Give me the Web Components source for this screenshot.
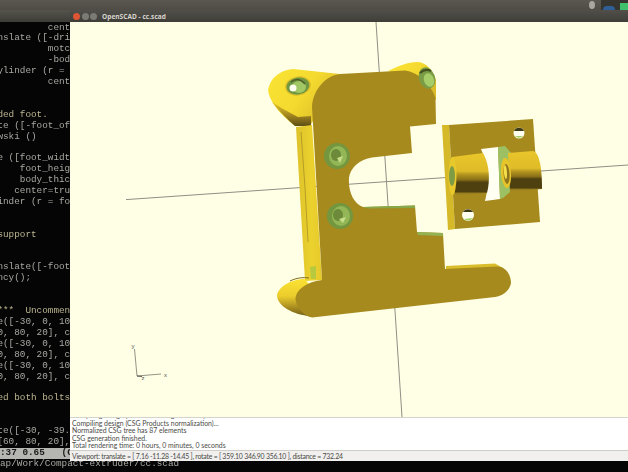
<!DOCTYPE html>
<html>
<head>
<meta charset="utf-8">
<title>OpenSCAD - cc.scad</title>
<style>
  html, body { margin: 0; padding: 0; background: #000; }
</style>
</head>
<body>
<desk-top>
  <term-window></term-window>
  <scad-window title-text="OpenSCAD - cc.scad">
    <model-view></model-view>
    <console-log></console-log>
    <status-line>Viewport: translate = [ 7.16 -11.28 -14.45 ], rotate = [ 359.10 346.90 356.10 ], distance = 732.24</status-line>
  </scad-window>
</desk-top>

<script>
// Desktop with top panel and free-floating windows
class DeskTop extends HTMLElement {
  constructor() {
    super();
    this.attachShadow({ mode: 'open' });
    this.shadowRoot.innerHTML = `
      <style>
        :host { display: block; position: relative; width: 628px; height: 472px; overflow: hidden;
                background: linear-gradient(90deg, #000 0 470px, #12060e 500px, #1f0a18 100%); }
        .panel { height: 10px; background: linear-gradient(#5a5850, #4e4c45); display: flex; justify-content: flex-end; align-items: center; }
        .tray { width: 27px; height: 10px; position: relative; background: #37352f; }
        .gear { position: absolute; left: -12px; top: 1px; width: 6px; height: 8px; border-radius: 50%; background: #a9a79f; }
        .blue { position: absolute; left: 2px; top: 6px; width: 12px; height: 4px; border-radius: 6px 6px 0 0; background: #2f5f96; }
        .green { position: absolute; left: 19px; top: 3px; width: 8px; height: 7px; background: #3fc06a; }
      </style>
      <div class="panel"><div class="tray"><i class="gear"></i><i class="blue"></i><i class="green"></i></div></div>
      <slot></slot>
    `;
  }
}

// Terminal behind the OpenSCAD window
class TermWindow extends HTMLElement {
  constructor() {
    super();
    this.attachShadow({ mode: 'open' });
    const lines = [
      '         cent', 'nslate ([-dri', '         motc', '         -bod', 'ylinder (r = ', '         cent', '', '',
      '<b>ded foot.</b>', 'te ([-foot_of', 'wski ()', '', 'e ([foot_widt', '    foot_heig', '    body_thic', '   center=tru',
      'inder (r = fo', '', '', '<b>support</b>', '', '', 'nslate([-foot', 'ncy();', '', '',
      '<b>***  Uncommen</b>', 'e([-30, 0, 10', '0, 80, 20], c', 'e([-30, 0, 10', '0, 80, 20], c', 'e([-30, 0, 10', '0, 80, 20], c', '',
      '<b>ed both bolts</b>', '', '', 'te([-30, -39.', '[60, 80, 20],'
    ];
    this.shadowRoot.innerHTML = `
      <style>
        :host { display: block; position: absolute; left: 0; top: 10px; width: 628px; height: 462px; background: #050505; }
        .bar { height: 12px; background: linear-gradient(#55534c, #3d3c37); }
        pre { margin: 0 0 0 -2.6px; padding-top: .5px; font: 9.33px/10.9px "Liberation Mono", monospace; color: #a9a9a3; filter: blur(.3px); }
        b { font-weight: normal; color: #bdb692; }
        .mode { display: block; margin-left: 2.6px; background: #b5b5b1; color: #1a1a1a; font-weight: bold; }
        .path { display: block; padding-left: 2.6px; color: #a9a9a5; }
      </style>
      <div class="bar"></div>
      <pre>${lines.join('\n')}
<span class="mode">:37 0.65   (C</span><span class="path">ap/Work/Compact-extruder/cc.scad</span></pre>
    `;
  }
}

// OpenSCAD window frame
class ScadWindow extends HTMLElement {
  constructor() {
    super();
    this.attachShadow({ mode: 'open' });
    this.shadowRoot.innerHTML = `
      <style>
        :host { display: flex; flex-direction: column; position: absolute; left: 70px; top: 10px; width: 558px; height: 451px; background: #f2f1f0; }
        .title { flex: 0 0 12px; display: flex; align-items: center; box-sizing: border-box; padding-top: 1px; background: linear-gradient(#514f49, #3e3d38); }
        .btn { width: 7px; height: 7px; border-radius: 50%; margin-left: 1.500px; background: #7b7a74; }
        .btn.close { margin-left: 3px; background: #dc5636; }
        .title span { margin-left: 5px; font: bold 6.500px "Open Sans", sans-serif; color: #d8d6cf; letter-spacing: .05px; }
      </style>
      <div class="title"><i class="btn close"></i><i class="btn"></i><i class="btn"></i><span>${this.getAttribute('title-text')}</span></div>
      <slot></slot>
    `;
  }
}

// 3D viewport, drawn in page coordinates
class ModelView extends HTMLElement {
  constructor() {
    super();
    this.attachShadow({ mode: 'open' });
    this.shadowRoot.innerHTML = `
      <style>
        :host { display: block; flex: 0 0 395px; background: #ffffe5; }
        svg { display: block; }
        text { font: 6px "Liberation Sans", sans-serif; fill: #555; }
      </style>
      <svg width="558" height="395" viewBox="70 22 558 395">
        <defs>
          <linearGradient id="ear" x1="0" y1="0" x2="1" y2="0.6">
            <stop offset="0" stop-color="#fbe534"/><stop offset=".55" stop-color="#f4d92f"/><stop offset="1" stop-color="#d9bc28"/>
          </linearGradient>
          <linearGradient id="earLow" x1="0" y1="0" x2="0" y2="1">
            <stop offset="0" stop-color="#e8c92a"/><stop offset=".5" stop-color="#a98c20"/><stop offset="1" stop-color="#5e4e16"/>
          </linearGradient>
          <linearGradient id="side" x1="0" y1="0" x2="1" y2="0">
            <stop offset="0" stop-color="#dcc12b"/><stop offset=".6" stop-color="#ecd22e"/><stop offset="1" stop-color="#e5c92b"/>
          </linearGradient>
          <linearGradient id="footEnd" x1="0" y1="0" x2="0" y2="1">
            <stop offset="0" stop-color="#fbe233"/><stop offset=".45" stop-color="#eccd2c"/><stop offset=".75" stop-color="#a88c20"/><stop offset="1" stop-color="#6e5b18"/>
          </linearGradient>
          <linearGradient id="cyl" x1="0" y1="0" x2="0" y2="1">
            <stop offset="0" stop-color="#e9c62a"/><stop offset=".42" stop-color="#dfbc28"/><stop offset=".5" stop-color="#b3951f"/>
            <stop offset=".62" stop-color="#8a7119"/><stop offset=".68" stop-color="#4f400f"/><stop offset=".9" stop-color="#4f400f"/><stop offset=".94" stop-color="#9a801e"/><stop offset="1" stop-color="#ab8e21"/>
          </linearGradient>
        </defs>

        <!-- axes -->
        <g stroke="#8f8f85" stroke-width="1" fill="none">
          <path d="M376 22L402 417"/>
          <path d="M126 199.6L628 165"/>
        </g>
        <g stroke="#77776c" stroke-width=".8" fill="none">
          <path d="M134.500 349L137 376"/>
          <path d="M137 376L161 374"/>
          <path d="M137 376L142 376.500" stroke="#333"/>
        </g>
        <text x="131.500" y="348">y</text>
        <text x="164" y="376.500">x</text>
        <text x="141.500" y="380">z</text>

        <!-- left ear -->
        <path d="M268 90C270 78 280 70 293 69L340 74L310 126L295 126C285 118 270 105 268 90Z" fill="url(#ear)"/>
        <path d="M272 102C280 112 288 120 295 126L311 126L311 116L298 117C288 112 278 106 272 102Z" fill="url(#earLow)"/>
        <!-- right ear -->
        <path d="M388 71C398 66 408 62 417 62C426 62 433 70 436 80L436 100L400 74Z" fill="url(#ear)"/>
        <!-- side wall of body -->
        <path d="M296 127L312 125L322 280L305 281Z" fill="url(#side)"/>
        <path d="M301 132L305 188L308 242" stroke="#a08a20" stroke-width=".7" fill="none"/>
        <path d="M310 267L316 266L316 279L311 279Z" fill="#b6c93f"/>
        <!-- foot rounded end -->
        <path d="M305 279C292 279 279 286 277 295C277 304 288 312 303 315L312 317L320 300Z" fill="url(#footEnd)"/>
        <path d="M290 281C296 278 303 277 309 278" stroke="#7d6a18" stroke-width="1" fill="none"/>
        <path d="M446 266L495 263.500L503 268L446 271Z" fill="#d9bd2a"/>

        <!-- body face -->
        <path d="M312 107C313 90 325 76 340 74L405 70.500C418 72 431 84 435.500 98L436 124L410 126.500L412 153L372 157.500C360 159 350 168 349 178C348 192 354 204 363 207L415 205.500L417 232L443 233L445 269L497 266.500C506 266.500 511 275 511 283C510 290 503 296 495 297L312 317.500C303 316 296 306 295.500 299C296 290 306 282 322 280Z" fill="#a78a1e"/>
        <path d="M363 207L415 205.500L415 208L368 208.500Z" fill="#84a84a"/>
        <path d="M417 232L443 233L443 236L418 235Z" fill="#93b253"/>

        <!-- body screw holes -->
        <g>
          <ellipse cx="298" cy="86" rx="13" ry="9.500" fill="#d7bd2a" transform="rotate(-10 298 86)"/>
          <ellipse cx="298" cy="86" rx="11.500" ry="8.500" fill="#6f9640" transform="rotate(-10 298 86)"/>
          <ellipse cx="299" cy="87" rx="7" ry="6" fill="#a2c865"/>
          <ellipse cx="293" cy="88" rx="3.500" ry="3.500" fill="#fffff0"/>
          <path d="M291 82Q298 76 305 84" stroke="#4f5c25" stroke-width="1.500" fill="none"/>
        </g>
        <g>
          <ellipse cx="427" cy="78" rx="8" ry="11" fill="#7a9c45" transform="rotate(-20 427 78)"/>
          <ellipse cx="429" cy="80" rx="5" ry="7" fill="#a7cd68" transform="rotate(-20 429 80)"/>
          <path d="M420 73Q425 68 431 71" stroke="#45511f" stroke-width="2" fill="none"/>
        </g>
        <g>
          <ellipse cx="337" cy="156" rx="13" ry="13" fill="#73963f"/>
          <ellipse cx="338" cy="156" rx="9" ry="10" fill="#93b757"/>
          <ellipse cx="336" cy="155" rx="5" ry="6" fill="#6c8a3a"/>
          <path d="M337 158L343 156L340 163Z" fill="#c8de88"/>
        </g>
        <g>
          <ellipse cx="340" cy="216" rx="13" ry="13" fill="#73963f"/>
          <ellipse cx="341" cy="216" rx="9" ry="10" fill="#93b757"/>
          <ellipse cx="338" cy="215" rx="5" ry="6" fill="#6c8a3a"/>
          <path d="M339 219L346 217L343 223Z" fill="#c8de88"/>
        </g>

        <!-- motor plate -->
        <path d="M442 125L449 125L455 229L448 230Z" fill="#d5b929"/>
        <path d="M449 125L533 119L540 222L455 229Z" fill="#a78a1e"/>
        <circle cx="519" cy="133" r="5.500" fill="#fffff0"/>
        <path d="M514 131A5.500 5.500 0 0 1 524 131Z" fill="#3c3a16"/>
        <path d="M515 136A5.500 5.500 0 0 0 523 136Z" fill="#a5cc66"/>
        <circle cx="468" cy="215" r="6" fill="#fffff0"/>
        <path d="M463 212A6 6 0 0 1 473 212Z" fill="#3c3a16"/>
        <path d="M464 219A6 6 0 0 0 473 218Z" fill="#a5cc66"/>

        <!-- opening between the bearings -->
        <path d="M481 149L498 147L500 199L485 201C489 186 489 166 481 149Z" fill="#fffff2"/>
        <path d="M498 147L505 146L512 154L510 192L503 198L500 199Z" fill="#9dc162"/>

        <!-- bearing tubes -->
        <path d="M452 157L483 153C490 165 490 182 487 193L455 196Z" fill="url(#cyl)"/>
        <ellipse cx="452.500" cy="176" rx="4" ry="19" fill="#e8c82b"/>
        <ellipse cx="452" cy="176" rx="3" ry="10" fill="#7e9c44"/>
        <path d="M508 153L533 151C540 153 542 170 542 189L510 192Z" fill="url(#cyl)"/>
        <ellipse cx="506" cy="173" rx="5" ry="15" fill="#e6c42a" transform="rotate(-4 506 173)"/>
        <ellipse cx="506.500" cy="174" rx="3" ry="10" fill="#8f7520" transform="rotate(-4 506 173)"/>
        <ellipse cx="505.500" cy="172" rx="1.500" ry="7" fill="#f5df4a" transform="rotate(-4 506 173)"/>
      </svg>
    `;
  }
}

// Console output under the viewport
class ConsoleLog extends HTMLElement {
  constructor() {
    super();
    this.attachShadow({ mode: 'open' });
    const rows = [
      'Compiling design (CSG Products generation)...',
      'Compiling design (CSG Products normalization)...',
      'Normalized CSG tree has 87 elements',
      'CSG generation finished.',
      'Total rendering time: 0 hours, 0 minutes, 0 seconds'
    ];
    this.shadowRoot.innerHTML = `
      <style>
        :host { display: flex; flex-direction: column; justify-content: flex-end; flex: 0 0 34px; box-sizing: border-box; overflow: hidden;
                background: #fff; border-top: 1px solid #d5d3cd; border-bottom: 1px solid #cfcdc8; padding: 0 0 0 2px;
                font: 6.900px/7.600px "Lato", sans-serif; color: #4a4a46; }
        div { white-space: nowrap; flex: none; }
      </style>
      ${rows.map(r => `<div>${r}</div>`).join('')}
    `;
  }
}

// Status bar with the viewport readout
class StatusLine extends HTMLElement {
  constructor() {
    super();
    this.attachShadow({ mode: 'open' });
    this.shadowRoot.innerHTML = `
      <style>
        :host { display: flex; align-items: center; flex: 1; padding-left: 2px; background: #f1f0ee;
                font: 6.900px "Lato", sans-serif; letter-spacing: -.23px; color: #4a4a46; white-space: nowrap; }
      </style>
      <slot></slot>
    `;
  }
}

customElements.define('desk-top', DeskTop);
customElements.define('term-window', TermWindow);
customElements.define('scad-window', ScadWindow);
customElements.define('model-view', ModelView);
customElements.define('console-log', ConsoleLog);
customElements.define('status-line', StatusLine);
</script>
</body>
</html>
